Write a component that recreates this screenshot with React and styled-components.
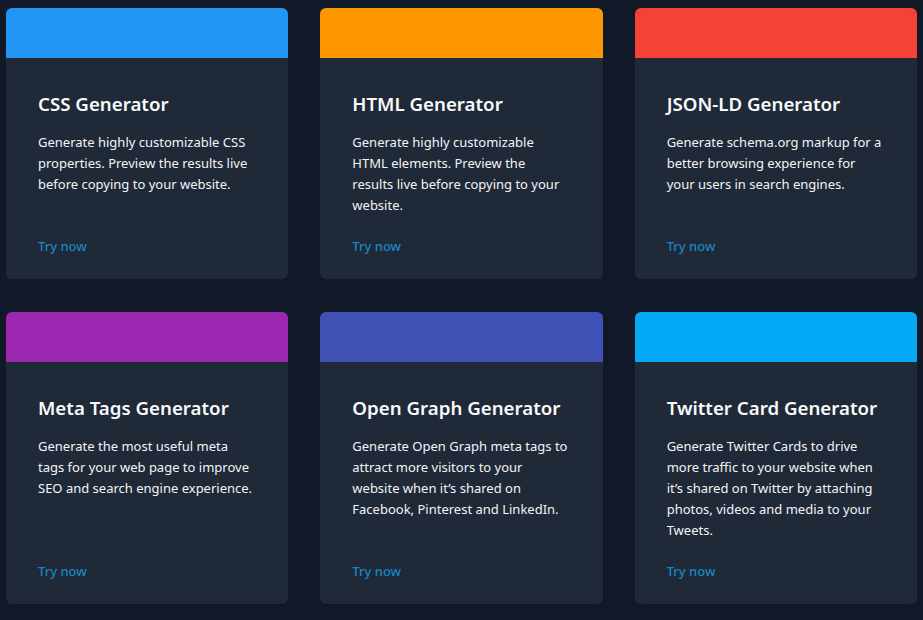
import React from 'react';
import styled, { createGlobalStyle } from 'styled-components';

const GlobalStyle = createGlobalStyle`
  html, body {
    margin: 0;
    padding: 0;
    background: #111827;
  }
  body {
    font-family: 'Noto Sans', 'Open Sans', sans-serif;
    -webkit-font-smoothing: antialiased;
  }
`;

const Page = styled.div`
  min-height: 620px;
  box-sizing: border-box;
  padding: 8px 6px;
  background: #111827;
`;

const Grid = styled.div`
  display: grid;
  grid-template-columns: repeat(3, 1fr);
  column-gap: 32px;
  row-gap: 33px;
`;

const Card = styled.div`
  display: flex;
  flex-direction: column;
  background: #1f2937;
  border-radius: 6px;
  overflow: hidden;
`;

const Band = styled.div`
  height: 50px;
  background: ${(props) => props.color};
`;

const CardBody = styled.div`
  flex: 1;
  display: flex;
  flex-direction: column;
  padding: 32px 32px 23px 32px;
`;

const Title = styled.h3`
  margin: 0;
  font-size: 18.7px;
  line-height: 28px;
  font-weight: 600;
  color: #f9fafb;
  white-space: nowrap;
`;

const Description = styled.p`
  margin: 14px 0 20px 0;
  max-width: 216px;
  font-size: 13px;
  line-height: 21px;
  color: #f3f4f6;
`;

const TryNow = styled.a`
  margin-top: auto;
  font-size: 13px;
  line-height: 20px;
  font-weight: 500;
  color: #1a86c6;
  text-decoration: none;
  cursor: pointer;
`;

const generators = [
  {
    title: 'CSS Generator',
    color: '#2196f3',
    text: 'Generate highly customizable CSS properties. Preview the results live before copying to your website.',
  },
  {
    title: 'HTML Generator',
    color: '#ff9800',
    text: 'Generate highly customizable HTML elements. Preview the results live before copying to your website.',
  },
  {
    title: 'JSON-LD Generator',
    color: '#f44336',
    text: 'Generate schema.org markup for a better browsing experience for your users in search engines.',
  },
  {
    title: 'Meta Tags Generator',
    color: '#9c27b0',
    text: 'Generate the most useful meta tags for your web page to improve SEO and search engine experience.',
  },
  {
    title: 'Open Graph Generator',
    color: '#3f51b5',
    text: 'Generate Open Graph meta tags to attract more visitors to your website when it\u2019s shared on Facebook, Pinterest and LinkedIn.',
  },
  {
    title: 'Twitter Card Generator',
    color: '#03a9f4',
    text: 'Generate Twitter Cards to drive more traffic to your website when it\u2019s shared on Twitter by attaching photos, videos and media to your Tweets.',
  },
];

const GeneratorCard = ({ title, color, text }) => (
  <Card>
    <Band color={color} />
    <CardBody>
      <Title>{title}</Title>
      <Description>{text}</Description>
      <TryNow>Try now</TryNow>
    </CardBody>
  </Card>
);

const App = () => (
  <Page>
    <GlobalStyle />
    <Grid>
      {generators.map((g) => (
        <GeneratorCard key={g.title} {...g} />
      ))}
    </Grid>
  </Page>
);

export default App;
